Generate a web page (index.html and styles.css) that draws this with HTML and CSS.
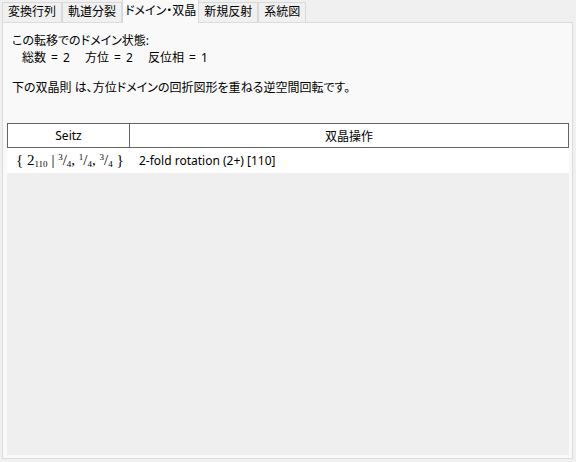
FILE: index.html
```html
<!DOCTYPE html>
<html lang="ja">
<head>
    <meta charset="UTF-8">
    <title>ドメイン・双晶</title>
    <link rel="stylesheet" href="styles.css">
</head>
<body>
    <div class="tabs">
        <div class="tab">変換行列</div>
        <div class="tab">軌道分裂</div>
        <div class="tab active">ドメイン・双晶</div>
        <div class="tab">新規反射</div>
        <div class="tab">系統図</div>
    </div>

    <div class="panel">
        <div class="info">
            <p>この転移でのドメイン状態:</p>
            <p class="counts">
                <span class="count">総数 = 2</span>
                <span class="count">方位 = 2</span>
                <span class="count">反位相 = 1</span>
            </p>
            <p class="note">下の双晶則 は、方位ドメインの回折図形を重ねる逆空間回転です。</p>
        </div>

        <div class="grid">
            <div class="grid-head">
                <div class="col-seitz">Seitz</div>
                <div class="col-op">双晶操作</div>
            </div>
            <div class="grid-row">
                <div class="col-seitz seitz">{ 2<sub>110</sub> | <sup>3</sup>/<sub>4</sub>, <sup>1</sup>/<sub>4</sub>, <sup>3</sup>/<sub>4</sub> }</div>
                <div class="col-op">2-fold rotation (2+) [110]</div>
            </div>
        </div>
    </div>
</body>
</html>
```

FILE: styles.css
```css
body {
    margin: 0;
    background: #f0f0f0;
    font-family: "Noto Sans", "Noto Sans CJK JP", sans-serif;
    font-size: 12px;
    font-feature-settings: "palt";
    color: #000;
    height: 462px;
    overflow: hidden;
}
.tabs {
    display: flex;
    align-items: flex-end;
    height: 22px;
    padding-left: 2px;
    position: relative;
    z-index: 1;
}
.tab {
    height: 19px;
    line-height: 18px;
    padding: 0 5px;
    border: 1px solid #d9d9d9;
    border-bottom: none;
    background: #f0f0f0;
    margin-right: 0;
}
.tab.active {
    height: 23px;
    line-height: 21px;
    margin: 0 -1px -1px 0;
    padding: 0 2px;
    background: #f9f9f9;
    position: relative;
}
.panel {
    margin: 0 3px 0 2px;
    height: 435px;
    border: 1px solid #dcdcdc;
    background: #f9f9f9;
    display: flex;
    flex-direction: column;
}
.info {
    padding: 9px 9px 0;
}
.info p {
    margin: 0;
    line-height: 17px;
}
.counts {
    padding-left: 10px;
    display: flex;
    word-spacing: 2px;
}
.count {
    width: 63px;
}
.info .note {
    margin-top: 13px;
}
.grid {
    flex: 1;
    margin: 27px 3px 3px 4px;
    background: #efefef;
}
.grid-head,
.grid-row {
    display: flex;
    height: 25px;
    align-items: center;
}
.grid-head {
    height: 23px;
    border: 1px solid #646464;
    background: #fff;
}
.grid-head .col-seitz {
    border-right: 1px solid #646464;
    height: 100%;
    line-height: 23px;
    text-align: center;
}
.grid-head .col-op {
    flex: 1;
    text-align: center;
}
.grid-row {
    background: #fff;
}
.col-seitz {
    width: 122px;
    flex-shrink: 0;
    box-sizing: border-box;
}
.grid-row .col-op {
    padding-left: 10px;
}
.seitz {
    font-family: "Liberation Serif", "DejaVu Serif", serif;
    font-size: 15px;
    padding-left: 9px;
    white-space: nowrap;
}
.seitz sub,
.seitz sup {
    font-size: 9px;
}
.seitz sub {
    vertical-align: -2px;
}
.seitz sup {
    vertical-align: 5px;
}
```
